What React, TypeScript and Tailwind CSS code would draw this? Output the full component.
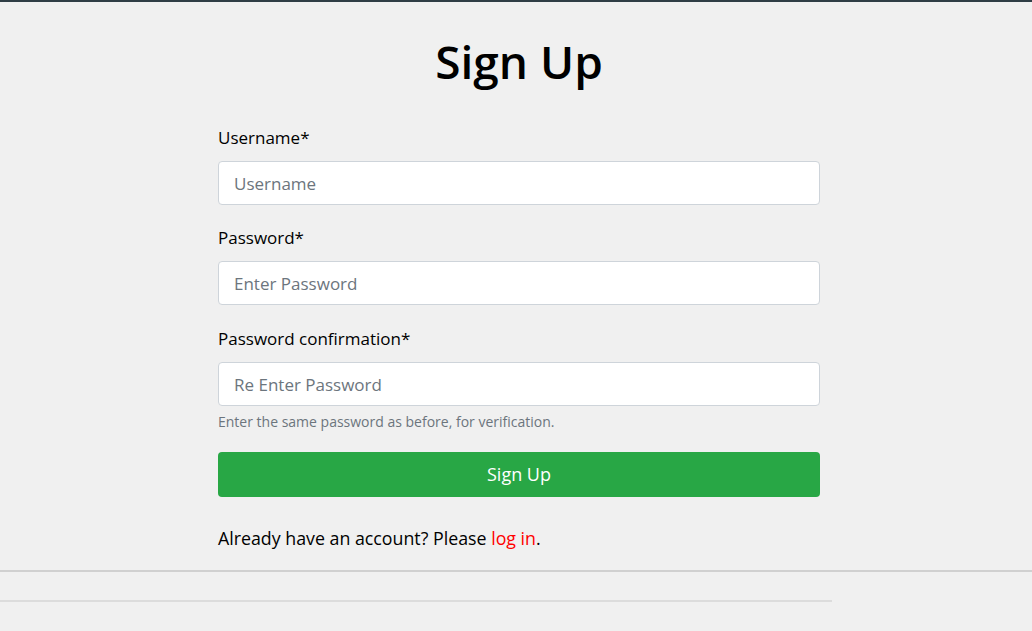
import React from "react";

const font = { fontFamily: '"Open Sans", "Noto Sans", sans-serif' };

function Field(props: {
  label: string;
  placeholder: string;
  type?: string;
  help?: string;
  last?: boolean;
}) {
  return (
    <div className={props.last ? "pt-[1px]" : "mb-[19px]"}>
      <label className="block text-[17px] leading-[27px] text-black mb-[10px]">
        {props.label}
      </label>
      <input
        type={props.type || "text"}
        placeholder={props.placeholder}
        className="block w-full h-[44px] px-[15px] text-[17px] bg-white border border-[#ced4da] rounded-[4px] text-[#495057] placeholder:text-[#6c757d] outline-none"
      />
      {props.help && (
        <div className="mt-[5px] text-[14px] leading-[21px] text-[#6c757d]">
          {props.help}
        </div>
      )}
    </div>
  );
}

export default function App() {
  return (
    <div className="min-h-[631px] bg-[#f0f0f0]" style={font}>
      <div className="h-[2px] bg-[#2f3d45]" />
      <div className="flex justify-center pl-[6px]">
        <div className="w-[602px]">
          <h1 className="text-center text-[46px] leading-[56px] font-semibold text-black mt-[31px] mb-[35px]">
            Sign Up
          </h1>
          <form onSubmit={(e) => e.preventDefault()}>
            <Field label="Username*" placeholder="Username" />
            <Field label="Password*" placeholder="Enter Password" type="password" />
            <Field
              label="Password confirmation*"
              placeholder="Re Enter Password"
              type="password"
              help="Enter the same password as before, for verification."
              last
            />
            <button
              type="submit"
              className="mt-[20px] w-full h-[45px] rounded-[4px] bg-[#28a745] text-white text-[18px]"
            >
              Sign Up
            </button>
          </form>
          <p className="mt-[28px] text-[17.8px] leading-[27px] text-black">
            Already have an account? Please{" "}
            <a href="#" className="text-[#ff0000]">
              log in
            </a>
            .
          </p>
        </div>
      </div>
      <div className="mt-[18px] h-[2px] bg-[#d0d0d0]" />
      <div className="mt-[28px] w-[832px] h-[2px] bg-[#dcdcdc]" />
    </div>
  );
}
